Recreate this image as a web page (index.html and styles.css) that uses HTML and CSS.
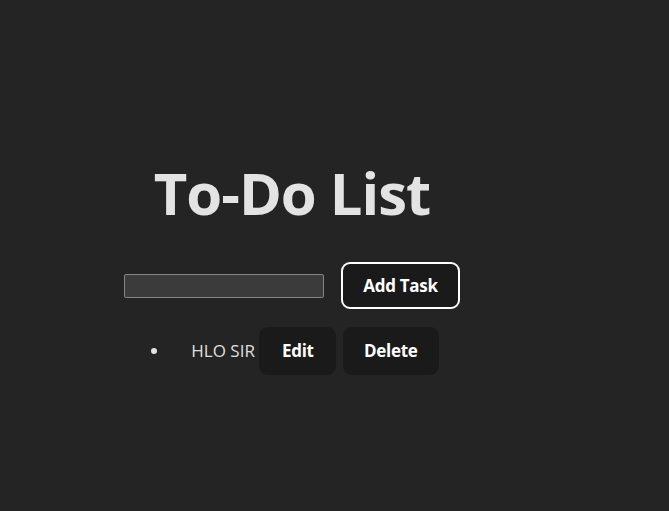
FILE: index.html
```html
<!DOCTYPE html>
<html lang="en">
<head>
<meta charset="utf-8">
<title>To-Do List</title>
<link rel="stylesheet" href="styles.css">
</head>
<body>
<div class="app">
  <h1 class="title">To-Do List</h1>
  <div class="add-row">
    <input class="task-input" type="text">
    <button class="btn btn-add">Add Task</button>
  </div>
  <ul class="task-list">
    <li class="task-item"><span class="task-text">HLO SIR</span> <button class="btn btn-edit">Edit</button> <button class="btn btn-delete">Delete</button></li>
  </ul>
</div>
</body>
</html>
```
FILE: styles.css
```css
html, body {
  margin: 0;
  padding: 0;
}
body {
  background: #242424;
  color: rgba(255, 255, 255, 0.87);
  font-family: "Open Sans", "Noto Sans", sans-serif;
  font-size: 17px;
  min-height: 511px;
  display: flex;
  justify-content: center;
  padding-right: 85px;
  box-sizing: border-box;
}
.app {
  width: 336px;
  padding-top: 148px;
  text-align: center;
}
.title {
  margin: 0;
  font-size: 58px;
  font-weight: 700;
  line-height: 90px;
  color: #e3e3e3;
  letter-spacing: -1px;
}
.add-row {
  margin-top: 24px;
  display: flex;
  align-items: center;
  gap: 17px;
}
.task-input {
  width: 200px;
  height: 24px;
  box-sizing: border-box;
  background: #3b3b3b;
  border: 1px solid #858585;
  border-radius: 2px;
  color: #fff;
  padding: 0 4px;
  font: inherit;
}
.btn {
  font-family: inherit;
  font-size: 17px;
  font-weight: 700;
  color: #fff;
  background: #1a1a1a;
  border: 2px solid transparent;
  border-radius: 9px;
  padding: 10px 0;
  line-height: 24px;
  cursor: pointer;
  letter-spacing: -0.3px;
}
.btn-add {
  border-color: #ffffff;
  width: 119px;
  height: 47px;
  padding: 0;
}
.btn-edit {
  width: 77px;
}
.btn-delete {
  width: 96px;
  margin-left: 2px;
}
.task-list {
  margin: 18px 0 0;
  padding-left: 46px;
}
.task-item {
  text-align: center;
}
.task-text {
  font-size: 17px;
}
```
